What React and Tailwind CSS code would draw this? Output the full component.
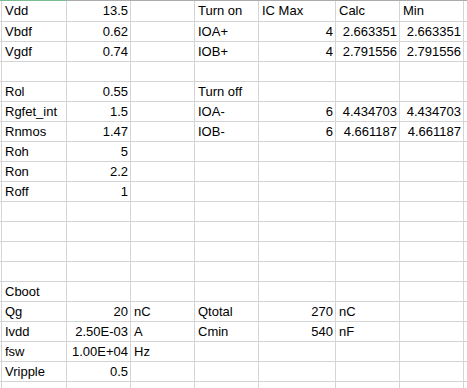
import React from 'react';

// column widths incl. the 1px right border: spacer, A..G, rest
const cols = ['w-[2px]', 'w-[65px]', 'w-[64px]', 'w-[64px]', 'w-[64px]', 'w-[77px]', 'w-[64px]', 'w-[64px]'];

// each cell: string = left aligned text, number/{r:..} = right aligned
const rows = [
  ['Vdd', { r: '13.5' }, '', 'Turn on', 'IC Max', 'Calc', 'Min'],
  ['Vbdf', { r: '0.62' }, '', 'IOA+', { r: '4' }, { r: '2.663351' }, { r: '2.663351' }],
  ['Vgdf', { r: '0.74' }, '', 'IOB+', { r: '4' }, { r: '2.791556' }, { r: '2.791556' }],
  [],
  ['Rol', { r: '0.55' }, '', 'Turn off'],
  ['Rgfet_int', { r: '1.5' }, '', 'IOA-', { r: '6' }, { r: '4.434703' }, { r: '4.434703' }],
  ['Rnmos', { r: '1.47' }, '', 'IOB-', { r: '6' }, { r: '4.661187' }, { r: '4.661187' }],
  ['Roh', { r: '5' }],
  ['Ron', { r: '2.2' }],
  ['Roff', { r: '1' }],
  [],
  [],
  [],
  [],
  ['Cboot'],
  ['Qg', { r: '20' }, 'nC', 'Qtotal', { r: '270' }, 'nC'],
  ['Ivdd', { r: '2.50E-03' }, 'A', 'Cmin', { r: '540' }, 'nF'],
  ['fsw', { r: '1.00E+04' }, 'Hz'],
  ['Vripple', { r: '0.5' }],
  [],
];

function Cell({ value, width }) {
  const right = value && typeof value === 'object';
  const text = right ? value.r : value;
  return (
    <div className={`${width} shrink-0 h-full border-r border-[#d4d4d4] relative`}>
      {text ? (
        <span
          className={`absolute top-0 whitespace-nowrap leading-[20px] ${right ? 'right-[2px]' : 'left-[3px]'}`}
        >
          {text}
        </span>
      ) : null}
    </div>
  );
}

export default function App() {
  return (
    <div
      className="w-[467px] h-[388px] overflow-hidden bg-white text-black text-[13px]"
      style={{ fontFamily: '"Liberation Sans", Arial, sans-serif' }}
    >
      {/* header edge, column A selected */}
      <div className="flex h-px">
        <div className="w-[66px] bg-[#7dbb93]" />
        <div className="flex-1 bg-[#ababab]" />
      </div>
      {rows.map((row, i) => (
        <div
          key={i}
          className={`flex border-b border-[#d4d4d4] ${i === 0 ? 'h-[21px]' : 'h-[20px]'}`}
        >
          <div className={`${cols[0]} shrink-0 h-full border-r border-[#d4d4d4]`} />
          {cols.slice(1).map((w, j) => (
            <Cell key={j} value={row[j]} width={w} />
          ))}
          <div className="flex-1" />
        </div>
      ))}
    </div>
  );
}
